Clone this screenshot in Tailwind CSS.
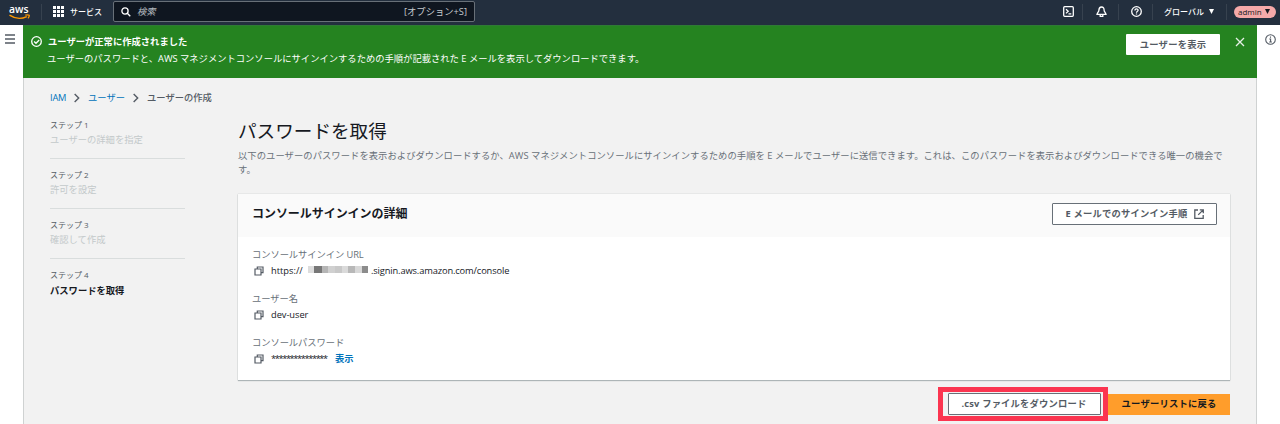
<!DOCTYPE html>
<html lang="ja">
<head>
<meta charset="utf-8">
<title>IAM - ユーザーの作成</title>
<script src="https://cdn.jsdelivr.net/npm/@tailwindcss/browser@4"></script>
</head>
<body class="w-[1280px] h-[424px] overflow-hidden flex flex-col bg-white text-[9.3px] leading-[14px] whitespace-nowrap text-[#16191f] font-['Open_Sans','Noto_Sans_CJK_JP',sans-serif]">
<svg class="hidden">
  <symbol id="copy" viewBox="0 0 10 10"><path d="M1 3h6v6H1zM3.300 3V1H9v5.700H7" fill="none" stroke="currentColor" stroke-width="1.200"/></symbol>
  <symbol id="chev" viewBox="0 0 8 12"><path d="M1.200 1.200 6 6 1.200 10.800" fill="none" stroke="currentColor" stroke-width="1.700"/></symbol>
</svg>

<header class="h-[25px] shrink-0 bg-[#232f3e] text-white flex items-center text-[8px] pb-[2px]">
  <svg class="ml-2 w-[23px] h-[20px] shrink-0 overflow-visible" viewBox="0 0 23 20">
    <text x="1" y="10.500" font-size="11" font-weight="600" textLength="19.500" lengthAdjust="spacingAndGlyphs" fill="#fff" font-family="Open Sans">aws</text>
    <path d="M1.500 13.200Q10 18.800 18.800 14.600" fill="none" stroke="#f90" stroke-width="1.400"/>
    <path d="M17.300 13.200q2.800-.8 4 .1q.2 1.600-1.400 3.100" fill="none" stroke="#f90" stroke-width="1.200"/>
  </svg>
  <div class="ml-[10px] w-px h-[16px] bg-[#37424f]"></div>
  <svg class="ml-[11px] w-[11px] h-[11px]" viewBox="0 0 11 11" fill="#fff"><path d="M0 0h3v3H0zM4 0h3v3H4zM8 0h3v3H8zM0 4h3v3H0zM4 4h3v3H4zM8 4h3v3H8zM0 8h3v3H0zM4 8h3v3H4zM8 8h3v3H8z"/></svg>
  <span class="ml-[6px] w-[43px] font-medium">サービス</span>
  <div class="w-[362px] h-[21px] border border-[#687078] rounded-[2px] bg-[#0f1620] flex items-center pl-[7px] pr-[7px] text-[9.3px] text-[#b4babf]">
    <svg class="w-[10px] h-[10px]" viewBox="0 0 10 10" fill="none" stroke="#fff" stroke-width="1.300"><circle cx="4" cy="4" r="3.100"/><path d="M6.300 6.300 9.300 9.300"/></svg>
    <span class="ml-[6px] italic">検索</span>
    <span class="ml-auto text-[#c5cacf]">[オプション+S]</span>
  </div>
  <div class="ml-auto flex items-center">
    <svg class="-mr-[2px] w-[11px] h-[11px]" viewBox="0 0 11 11" fill="none" stroke="#fff" stroke-width="1.300"><rect x=".7" y=".7" width="9.600" height="9.600" rx="1"/><path d="M3 3.200 5.200 5.300 3 7.400M5.500 7.900h2.800"/></svg>
    <div class="ml-[10px] w-px h-[16px] bg-[#37424f]"></div>
    <svg class="ml-[13px] w-[11px] h-[12px]" viewBox="0 0 11 12" fill="none" stroke="#fff" stroke-width="1.300"><path d="M5.500 1C3.600 1 2.900 2.400 2.900 4.200 2.900 6 1.300 6.700 1 8.400h9C9.700 6.700 8.100 6 8.100 4.200 8.100 2.400 7.400 1 5.500 1zM4.200 8.600v1.800h2.600V8.600"/></svg>
    <div class="ml-[11px] w-px h-[16px] bg-[#37424f]"></div>
    <svg class="ml-[12px] w-[11px] h-[11px]" viewBox="0 0 11 11" fill="none" stroke="#fff" stroke-width="1.300"><circle cx="5.500" cy="5.500" r="4.800"/><path d="M3.900 4.500C3.900 2.400 7.100 2.500 7.100 4.300 7.100 5.300 5.500 5.300 5.500 6.700M5.500 7.400v1.100"/></svg>
    <div class="ml-[10px] w-px h-[16px] bg-[#37424f]"></div>
    <span class="ml-[11px] font-medium">グローバル</span>
    <svg class="ml-[5px] w-[5px] h-[5px]" viewBox="0 0 5 5"><path d="M0 0h5L2.500 5z" fill="#fff"/></svg>
    <div class="ml-[12px] w-px h-[16px] bg-[#37424f]"></div>
    <div class="ml-[7px] mr-[4px] w-[42px] h-[12px] rounded-full bg-[#f5a9a9] text-[#16191f] flex items-center pl-[4px] font-medium">
      <span class="w-[27px] leading-[12px]">admin</span>
      <svg class="w-[5px] h-[5px]" viewBox="0 0 5 5"><path d="M0 0h5L2.500 5z" fill="#16191f"/></svg>
    </div>
  </div>
</header>

<div class="flex flex-1 min-h-0">
  <aside class="w-[23px] shrink-0 pt-[9px] pl-[5px]">
    <svg class="w-[10px] h-[10px]" viewBox="0 0 10 10"><path d="M0 1h10M0 5h10M0 9h10" stroke="#545b64" stroke-width="1.300"/></svg>
  </aside>

  <div class="w-[1234px] shrink-0 bg-[#f2f2f2] border-x border-[#cfd2d2] flex flex-col">
    <section class="h-[53px] -mx-px shrink-0 bg-[#258320] text-white flex pl-[8px] border-t border-[#2f7a35]">
      <svg class="mt-[10px] w-[11px] h-[11px]" viewBox="0 0 11 11" fill="none" stroke="#fff" stroke-width="1.300"><circle cx="5.500" cy="5.500" r="4.800"/><path d="M3.100 5.500 5 7.300 8.200 4"/></svg>
      <div class="ml-[6px] pt-[9px] flex flex-col gap-[3px]">
        <p class="font-bold">ユーザーが正常に作成されました</p>
        <p class="-ml-px">ユーザーのパスワードと、<span class="font-medium">AWS</span> マネジメントコンソールにサインインするための手順が記載された E メールを表示してダウンロードできます。</p>
      </div>
      <button class="ml-auto mt-[8px] w-[94px] h-[21px] bg-white text-[#545b64] font-bold tracking-[0.25px] rounded-[1px]">ユーザーを表示</button>
      <svg class="ml-[15px] mr-[12px] mt-[11px] w-[10px] h-[10px]" viewBox="0 0 10 10"><path d="M1 1l8 8M9 1 1 9" stroke="#e6f0e6" stroke-width="1.300"/></svg>
    </section>

    <nav class="flex items-center pl-[26px] mt-[13px] h-[14px] shrink-0 text-[#545b64]">
      <a class="w-[23px] text-[#0073bb] font-medium"><span class="tracking-[-0.200px]">IAM</span></a>
      <svg class="w-[8px] h-[10px]" viewBox="0 0 8 12"><use href="#chev"/></svg>
      <a class="ml-[7px] text-[#0073bb]">ユーザー</a>
      <svg class="ml-[7px] w-[8px] h-[10px]" viewBox="0 0 8 12"><use href="#chev"/></svg>
      <span class="ml-[7px] font-medium">ユーザーの作成</span>
    </nav>

    <div class="flex pl-[26px]">
      <ol class="w-[135px] shrink-0 mt-[13px] text-[#c3c9ca]">
        <li class="h-[41px] border-b border-[#d9dddd]"><p class="text-[8px] text-[#545b64]">ステップ 1</p><p class="mt-px">ユーザーの詳細を指定</p></li>
        <li class="mt-[9px] h-[41px] border-b border-[#d9dddd]"><p class="text-[8px] text-[#545b64]">ステップ 2</p><p class="mt-px">許可を設定</p></li>
        <li class="mt-[9px] h-[41px] border-b border-[#d9dddd]"><p class="text-[8px] text-[#545b64]">ステップ 3</p><p class="mt-px">確認して作成</p></li>
        <li class="mt-[9px] h-[41px]"><p class="text-[8px] text-[#545b64]">ステップ 4</p><p class="mt-[2px] font-bold text-[#16191f]">パスワードを取得</p></li>
      </ol>

      <main class="ml-[53px] w-[992px] shrink-0 pt-[14px]">
        <h1 class="text-[18.600px] leading-[24px]">パスワードを取得</h1>
        <p class="mt-[6px] text-[#687078] tracking-[0.055px]">以下のユーザーのパスワードを表示およびダウンロードするか、<span class="font-medium">AWS</span> マネジメントコンソールにサインインするための手順を E メールでユーザーに送信できます。これは、このパスワードを表示およびダウンロードできる唯一の機会で<br>す。</p>

        <section class="mt-[17px] h-[186px] bg-white shadow-[0_1px_1px_rgba(0,28,36,0.250),0_0_1px_rgba(0,28,36,0.250)]">
          <div class="h-[43px] bg-[#fafafa] flex items-center justify-between pl-[14px] pr-[13px] pb-[3px]">
            <h2 class="text-[12px] font-bold tracking-[-0.050px]">コンソールサインインの詳細</h2>
            <button class="w-[165px] h-[22px] border border-[#687078] rounded-[1px] bg-white text-[#545b64] font-bold tracking-[0.200px] flex items-center justify-center gap-[6px]">E メールでのサインイン手順
              <svg class="w-[10px] h-[10px]" viewBox="0 0 10 10" fill="none" stroke="#545b64" stroke-width="1.300"><path d="M4 1H.8v8.300h8.400V6M5.800.800h3.500v3.500M9.200.900 4.200 5.900"/></svg>
            </button>
          </div>
          <dl class="pl-[14px] pt-[11px]">
            <dt class="text-[#687078] tracking-[-0.080px]">コンソールサインイン URL</dt>
            <dd class="mt-[2px] flex items-center h-[14px] font-medium">
              <svg class="ml-[2px] mr-[7px] w-[10px] h-[10px] text-[#545b64]"><use href="#copy"/></svg>
              <span class="w-[37px]">https://</span>
              <span class="flex w-[60px] h-[7px] mb-[3px]"><i class="w-[6px] bg-[#ddd]"></i><i class="w-[8px] bg-[#777]"></i><i class="w-[6px] bg-[#b5b5b5]"></i><i class="w-[7px] bg-[#d0d0d0]"></i><i class="w-[7px] bg-[#c8c8c8]"></i><i class="w-[6px] bg-[#dadada]"></i><i class="w-[7px] bg-[#b8b8b8]"></i><i class="w-[7px] bg-[#d8d8d8]"></i><i class="w-[6px] bg-[#8c8c8c]"></i></span>
              <span class="ml-[3px] tracking-[-0.130px]">.signin.aws.amazon.com/console</span>
            </dd>
            <dt class="mt-[14px] text-[#687078] tracking-[-0.080px]">ユーザー名</dt>
            <dd class="mt-[2px] flex items-center h-[14px] font-medium">
              <svg class="ml-[2px] mr-[7px] w-[10px] h-[10px] text-[#545b64]"><use href="#copy"/></svg>
              <span class="tracking-[-0.050px]">dev-user</span>
            </dd>
            <dt class="mt-[14px] text-[#687078] tracking-[-0.080px]">コンソールパスワード</dt>
            <dd class="mt-[2px] flex items-center h-[14px] font-medium">
              <svg class="ml-[2px] mr-[7px] w-[10px] h-[10px] text-[#545b64]"><use href="#copy"/></svg>
              <span class="w-[64px] tracking-[-1.400px]">***************</span>
              <a class="font-bold text-[#0073bb]">表示</a>
            </dd>
          </dl>
        </section>

        <div class="mt-[7px] flex items-center justify-end">
          <div class="w-[170px] h-[34px] border-[5px] border-[#fb3550] flex items-center justify-center pl-[2px]">
            <button class="w-[153px] h-[22px] border border-[#687078] rounded-[1px] bg-white text-[#545b64] font-bold tracking-[0.200px]">.csv ファイルをダウンロード</button>
          </div>
          <button class="w-[122px] h-[21px] bg-[#ff9d2b] font-bold tracking-[0.200px]">ユーザーリストに戻る</button>
        </div>
      </main>
    </div>
  </div>

  <aside class="flex-1 pt-[9px] pl-[8px]">
    <svg class="w-[11px] h-[11px]" viewBox="0 0 11 11" fill="none" stroke="#545b64" stroke-width="1.100"><circle cx="5.500" cy="5.500" r="4.800"/><path d="M5.500 2.500v1.200M4.300 5h1.300v3M4.200 8h2.700"/></svg>
  </aside>
</div>
</body>
</html>
